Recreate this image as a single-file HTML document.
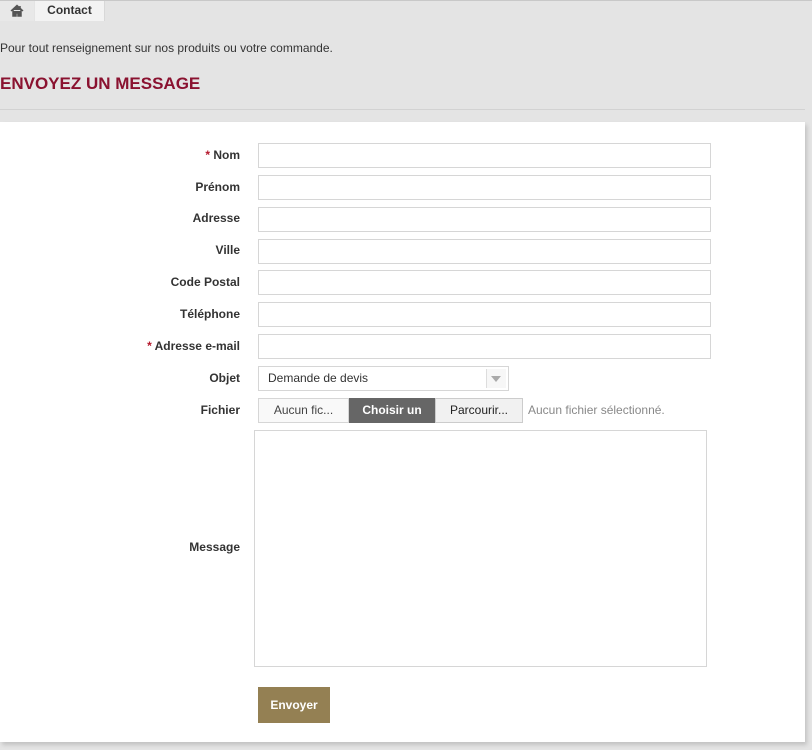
<!DOCTYPE html><html><head><style>
body{margin:0;width:812px;height:750px;background:#e4e4e4;font-family:"Liberation Sans",sans-serif;position:relative;overflow:hidden;color:#444}
.a{position:absolute}
.bc{left:0;top:0;width:104px;height:20px;border-top:1px solid #ccc}
.home{left:0;top:1px;width:34px;height:20px;background:#e8e8e8}
.ct{left:35px;top:1px;width:69px;height:20px;background:#f3f3f3;border-right:1px solid #d8d8d8;font-size:12px;font-weight:bold;line-height:19px;text-align:center;color:#333}
.panel{left:0;top:122px;width:805px;height:620px;background:#fff;box-shadow:2px 3px 4px rgba(0,0,0,.15)}
.lbl{right:572px;font-size:12px;font-weight:bold;color:#333;text-align:right;white-space:nowrap}
.lbl b{color:#b5182c}
.in{left:258px;width:451px;height:23px;border:1px solid #d6d6d6;background:#fff}
</style></head><body>
<div class="a" style="left:0;top:0;width:812px;height:1px;background:#c8c8c8"></div>
<div class="a home"><svg width="34" height="20"><path d="M11 10 L17 4.5 L23 10 M13 9 V15 H16 V12 H18 V15 H21 V9 M20 5 V8" fill="#555" stroke="#555" stroke-width="1.5"/></svg></div>
<div class="a ct">Contact</div>
<div class="a" style="left:0;top:41px;font-size:12px;color:#333">Pour tout renseignement sur nos produits ou votre commande.</div>
<div class="a" style="left:0;top:74px;font-size:17px;font-weight:bold;color:#8a1230">ENVOYEZ UN MESSAGE</div>
<div class="a" style="left:0;top:109px;width:805px;height:1px;background:#d2d2d2"></div>
<div class="a panel"></div>
<div class="a lbl" style="top:148px"><b>*</b> Nom</div><div class="a in" style="top:143px"></div>
<div class="a lbl" style="top:180px">Prénom</div><div class="a in" style="top:175px"></div>
<div class="a lbl" style="top:211px">Adresse</div><div class="a in" style="top:207px"></div>
<div class="a lbl" style="top:243px">Ville</div><div class="a in" style="top:239px"></div>
<div class="a lbl" style="top:275px">Code Postal</div><div class="a in" style="top:270px"></div>
<div class="a lbl" style="top:307px">Téléphone</div><div class="a in" style="top:302px"></div>
<div class="a lbl" style="top:339px"><b>*</b> Adresse e-mail</div><div class="a in" style="top:334px"></div>
<div class="a lbl" style="top:371px">Objet</div>
<div class="a in" style="top:366px;width:249px;font-size:12px;line-height:23px;color:#333"><span style="margin-left:9px">Demande de devis</span>
<div class="a" style="right:2px;top:2px;width:19px;height:19px;border-left:1px solid #ddd;background:#f7f7f7"><div class="a" style="left:4px;top:7px;border:5px solid transparent;border-top:6px solid #aaa;border-bottom:0"></div></div></div>
<div class="a lbl" style="top:403px">Fichier</div>
<div class="a" style="left:258px;top:398px;width:89px;height:23px;border:1px solid #d6d6d6;background:#f9f9f9;font-size:12px;line-height:23px;text-align:center;color:#444">Aucun fic...</div>
<div class="a" style="left:349px;top:398px;width:86px;height:25px;background:#666;color:#fff;font-size:12px;font-weight:bold;line-height:25px;text-align:center">Choisir un</div>
<div class="a" style="left:435px;top:398px;width:86px;height:23px;border:1px solid #ccc;background:#f1f1f1;font-size:12px;line-height:23px;text-align:center;color:#222">Parcourir...</div>
<div class="a" style="left:528px;top:403px;font-size:12px;color:#888">Aucun fichier sélectionné.</div>
<div class="a" style="left:254px;top:430px;width:451px;height:235px;border:1px solid #d6d6d6"></div>
<div class="a lbl" style="top:540px">Message</div>
<div class="a" style="left:258px;top:687px;width:72px;height:36px;background:#948053;color:#fff;font-size:12px;font-weight:bold;line-height:36px;text-align:center">Envoyer</div>
</body></html>
